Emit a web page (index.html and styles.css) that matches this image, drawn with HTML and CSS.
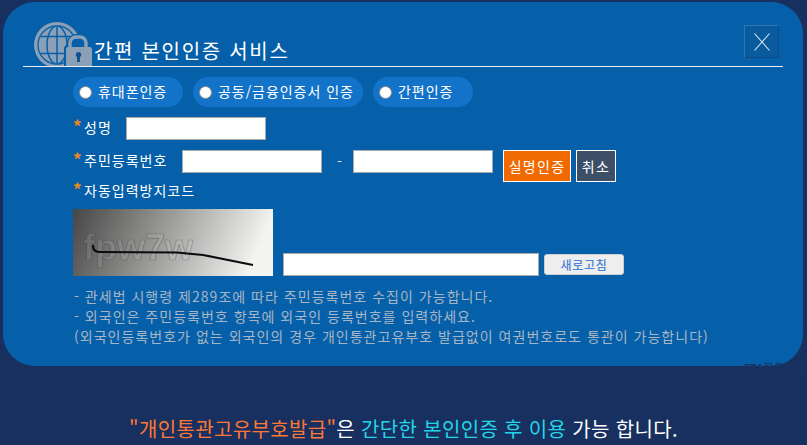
FILE: index.html
```html
<!DOCTYPE html>
<html lang="ko">
<head>
<meta charset="utf-8">
<title>간편 본인인증 서비스</title>
<link rel="stylesheet" href="styles.css">
</head>
<body>
<main class="panel">
  <header class="head">
    <svg class="logo" viewBox="0 0 58 44" aria-hidden="true">
      <defs>
        <clipPath id="gc"><circle cx="23" cy="23" r="18.500"/></clipPath>
      </defs>
      <circle cx="23" cy="23" r="23" fill="#8ba0b6"/>
      <circle cx="23" cy="23" r="19" fill="none" stroke="#0660a9" stroke-width="1.300"/>
      <g clip-path="url(#gc)" fill="none" stroke="#0660a9" stroke-width="1.500">
        <ellipse cx="23" cy="23" rx="10" ry="19"/>
        <path d="M2 14.500H44M2 31.500H44M23 3V44"/>
      </g>
      <path d="M30 44V27a5 5 0 0 1 3-4.500V20a9 9 0 0 1 9-8h3a9 9 0 0 1 9 8v3h4v21z" fill="#0660a9"/>
      <path d="M36 26v-5a6 6 0 0 1 6-6h4a6 6 0 0 1 6 6v5" fill="none" stroke="#8ba0b6" stroke-width="3.400"/>
      <path d="M34 25h22a2 2 0 0 1 2 2v17H32V27a2 2 0 0 1 2-2z" fill="#8ba0b6"/>
      <path d="M44.500 30a2.800 2.800 0 0 1 1.400 5.200V40h-2.800v-4.800a2.800 2.800 0 0 1 1.400-5.200z" fill="#0f4f8c"/>
    </svg>
    <h1 class="title">간편 본인인증 서비스</h1>
    <button class="close" type="button" aria-label="닫기">
      <svg viewBox="0 0 16 18" class="close-x" aria-hidden="true"><path d="M.5.500L15.500 17.500M15.500.500L.5 17.500"/></svg>
    </button>
  </header>

  <div class="body">
    <div class="tabs">
      <label class="tab tab-a"><span class="radio"></span>휴대폰인증</label>
      <label class="tab tab-b"><span class="radio"></span>공동/금융인증서 인증</label>
      <label class="tab tab-c"><span class="radio"></span>간편인증</label>
    </div>

    <div class="row row-name">
      <span class="label label-name"><b class="star">*</b>성명</span>
      <input class="field" type="text">
    </div>

    <div class="row row-rrn">
      <span class="label label-rrn"><b class="star">*</b>주민등록번호</span>
      <input class="field" type="text">
      <span class="dash">-</span>
      <input class="field" type="text">
      <button class="btn btn-verify" type="button">실명인증</button>
      <button class="btn btn-cancel" type="button">취소</button>
    </div>

    <div class="label label-code"><b class="star">*</b>자동입력방지코드</div>

    <div class="captcha-row">
      <svg class="captcha" viewBox="0 0 200 67" aria-label="자동입력방지 이미지">
        <defs>
          <linearGradient id="cg" x1="0" y1="0" x2="1" y2="0.15">
            <stop offset="0" stop-color="#464646"/>
            <stop offset="0.5" stop-color="#9c9c9a"/>
            <stop offset="1" stop-color="#f4f4f2"/>
          </linearGradient>
        </defs>
        <rect width="200" height="67" fill="url(#cg)"/>
        <text x="10" y="51" class="captcha-text">fpw7w</text>
        <path d="M20 36c0 5 2 7 6 7L104 43.500 130 46 180 56" fill="none" stroke="#0c0c0c" stroke-width="2.200"/>
      </svg>
      <input class="field field-code" type="text">
      <button class="btn-refresh" type="button">새로고침</button>
    </div>

    <ul class="notes">
      <li>- 관세법 시행령 제289조에 따라 주민등록번호 수집이 가능합니다.</li>
      <li>- 외국인은 주민등록번호 항목에 외국인 등록번호를 입력하세요.</li>
      <li>(외국인등록번호가 없는 외국인의 경우 개인통관고유부호 발급없이 여권번호로도 통관이 가능합니다)</li>
    </ul>
  </div>
</main>
<p class="ghost">FTA활용지원</p>
<p class="foot"><span class="orange">"개인통관고유부호발급"</span>은 <span class="cyan">간단한 본인인증 후 이용</span> 가능 합니다.</p>
</body>
</html>
```

FILE: styles.css
```css
* { box-sizing: border-box; }
html, body { margin: 0; padding: 0; }
body {
  position: relative;
  width: 807px;
  height: 445px;
  overflow: hidden;
  background: #17305f;
  color: #fff;
  font-family: "Noto Sans CJK KR", "Noto Sans", sans-serif;
}
.panel {
  width: 800px;
  height: 364px;
  margin: 2px 0 0 3px;
  background: #0660a9;
  border-radius: 32px;
  padding: 20px 20px 0;
}
.head {
  display: flex;
  align-items: flex-end;
  height: 45px;
  width: 760px;
  border-bottom: 1px solid #e8eef5;
  padding-left: 11px;
}
.logo { width: 58px; height: 44px; display: block; flex: none; }
.title {
  margin: 0 0 1px 2px;
  font-size: 20px;
  line-height: 28px;
  font-weight: 400;
  letter-spacing: 1.7px;
}
.close {
  margin: 0 4px 8px auto;
  width: 35px;
  height: 33px;
  padding: 0;
  background: #0a5a9e;
  border: 1px solid #2a76b6;
  border-right-color: #0c4a86;
  border-bottom-color: #0c4a86;
  display: flex;
  align-items: center;
  justify-content: center;
}
.close-x { width: 16px; height: 18px; display: block; }
.close-x path { stroke: #dfeaf4; stroke-width: 1.100; fill: none; }
.body { padding-left: 50px; }
.tabs { display: flex; gap: 10px; margin-top: 10px; }
.tab {
  display: flex;
  align-items: center;
  height: 30px;
  background: #1273c9;
  border-radius: 15px;
  padding: 0 0 2px 6px;
  font-size: 14px;
  letter-spacing: 0.95px;
}
.tab-a { width: 110px; }
.tab-b { width: 170px; }
.tab-c { width: 100px; }
.radio {
  width: 13px;
  height: 13px;
  margin: 2px 6px 0 0;
  border-radius: 50%;
  background: #fff;
  border: 1px solid #8b8b8b;
  flex: none;
}
.row { display: flex; align-items: flex-start; }
.row-name { margin-top: 10px; }
.row-rrn { margin-top: 10px; }
.label {
  display: block;
  font-size: 14px;
  line-height: 20px;
  white-space: nowrap;
  letter-spacing: 1px;
}
.star {
  display: inline-block;
  width: 11px;
  color: #f08a1d;
  font-size: 17px;
  line-height: 16px;
  font-weight: 700;
  letter-spacing: 0;
  vertical-align: 0;
}
.label-name { width: 53px; }
.label-rrn { width: 109px; }
.label-code { margin-top: -2px; }
.field {
  display: block;
  width: 140px;
  height: 23px;
  padding: 0;
  background: #fff;
  border: 1px solid #a9a9a9;
  border-radius: 0;
  flex: none;
}
.dash {
  width: 31px;
  padding-left: 4px;
  font-size: 14px;
  line-height: 22px;
  text-align: center;
  color: #dfe8f1;
}
.btn {
  height: 32px;
  padding: 0;
  border: 1px solid #fff;
  color: #fff;
  font-family: inherit;
  font-size: 14px;
  letter-spacing: 1.3px;
  flex: none;
}
.btn-verify { width: 68px; margin-left: 10px; background: #f16a00; }
.btn-cancel { width: 40px; margin-left: 5px; background: #3d4f67; }
.captcha-row { display: flex; align-items: flex-end; margin-top: 9px; }
.captcha { width: 200px; height: 67px; display: block; flex: none; }
.captcha-text {
  font-family: "Liberation Sans", sans-serif;
  font-size: 36px;
  font-weight: 700;
  fill: rgba(255, 255, 255, 0.1);
  stroke: rgba(45, 45, 45, 0.4);
  stroke-width: 0.700;
}
.field-code { width: 256px; margin-left: 10px; }
.btn-refresh {
  width: 80px;
  height: 21px;
  margin: 0 0 1px 5px;
  padding: 0;
  border: 1px solid #d0d0d0;
  border-radius: 3px;
  background: #eeeeee;
  color: #4a84d4;
  font-family: inherit;
  font-size: 12px;
  font-weight: 500;
  letter-spacing: 0.7px;
}
.notes {
  list-style: none;
  margin: 10px 0 0;
  padding: 0 0 0 1px;
  font-size: 14px;
  letter-spacing: 1.02px;
  line-height: 20px;
  color: #a8b5c4;
  white-space: nowrap;
}
.ghost {
  position: absolute;
  right: 3px;
  top: 362px;
  margin: 0;
  font-size: 11px;
  font-weight: 700;
  line-height: 12px;
  color: #1a3462;
}
.foot {
  margin: 48px 0 0;
  text-align: center;
  font-size: 20px;
  letter-spacing: 0.35px;
  line-height: 30px;
  color: #fff;
}
.orange { color: #ff7733; }
.cyan { color: #22d6e8; }
```
